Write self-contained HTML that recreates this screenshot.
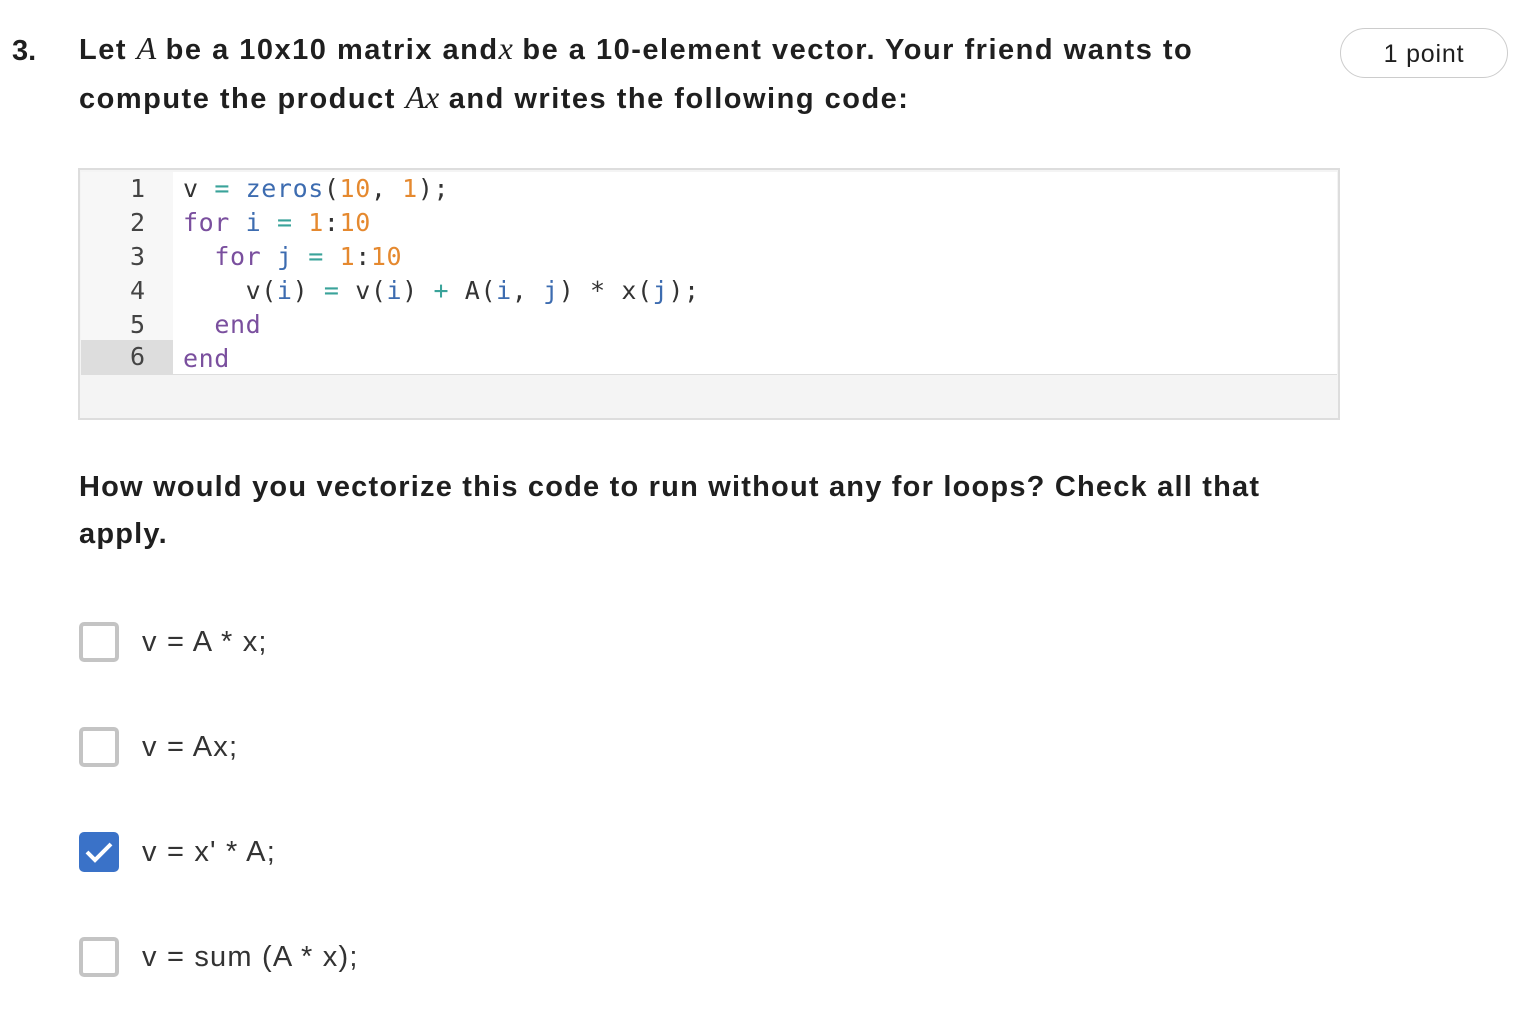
<!DOCTYPE html>
<html><head><style>
body{margin:0;background:#fff;width:1514px;height:1026px;overflow:hidden;font-family:"Liberation Sans",sans-serif;color:#1f1f1f;position:relative}
.num{position:absolute;left:12px;top:28px;font-size:29px;font-weight:bold;line-height:46px}
.q{position:absolute;left:79px;top:25px;width:1250px;font-size:29px;font-weight:bold;line-height:47px;letter-spacing:1.5px}
.q i{font-family:"Liberation Serif",serif;font-weight:normal;font-size:32px;letter-spacing:0}
.pt{position:absolute;left:1340px;top:28px;width:168px;height:50px;border:1px solid #ccc;border-radius:26px;box-sizing:border-box;font-size:25px;text-align:center;line-height:50px;color:#1f1f1f;letter-spacing:0.8px}
.code{position:absolute;left:78px;top:168px;width:1262px;height:252px;border:2px solid #ddd;box-sizing:border-box;background:#f4f4f4}
.ed{position:absolute;left:1px;top:2px;width:1256px;height:202px;background:#fff;border-bottom:1px solid #ddd}
.gut{position:absolute;left:0;top:0;width:92px;height:202px;background:#f7f7f7}
.ln{position:absolute;left:0;width:92px;height:34px;font-family:"DejaVu Sans Mono","Liberation Mono",monospace;font-size:25px;line-height:34px;text-align:right;box-sizing:border-box;padding-right:28px;color:#444}
.cl{position:absolute;left:102px;font-family:"DejaVu Sans Mono","Liberation Mono",monospace;font-size:25px;line-height:34px;white-space:pre;color:#333;letter-spacing:0.6px}
.k{color:#7a4f9e}.n{color:#e5892f}.f{color:#3d6cb0}.o{color:#3aa39a}
.q2{position:absolute;left:79px;top:464px;width:1230px;font-size:29px;font-weight:bold;line-height:47px;letter-spacing:1.2px}
.opt{position:absolute;left:79px;font-size:29px;color:#333;letter-spacing:1.2px}
.cb{position:absolute;left:0;top:0;width:40px;height:40px;border:4px solid #c4c4c4;border-radius:5px;box-sizing:border-box}
.cb.on{background:#3a72c8;border-color:#3a72c8}
.opt span{position:absolute;left:63px;top:0;line-height:40px;white-space:nowrap}
</style></head><body>
<div class="num">3.</div>
<div class="q">Let <i>A</i> be a 10x10 matrix and<i>x</i> be a 10-element vector. Your friend wants to compute the product <i>Ax</i> and writes the following code:</div>
<div class="pt">1 point</div>
<div class="code"><div class="ed">
<div class="gut"></div>
<div class="ln" style="top:0">1</div><div class="ln" style="top:34px">2</div><div class="ln" style="top:68px">3</div><div class="ln" style="top:102px">4</div><div class="ln" style="top:136px">5</div><div class="ln" style="top:168px;background:#ddd">6</div>
<div class="cl" style="top:0">v <span class="o">=</span> <span class="f">zeros</span>(<span class="n">10</span>, <span class="n">1</span>);</div>
<div class="cl" style="top:34px"><span class="k">for</span> <span class="f">i</span> <span class="o">=</span> <span class="n">1</span>:<span class="n">10</span></div>
<div class="cl" style="top:68px">  <span class="k">for</span> <span class="f">j</span> <span class="o">=</span> <span class="n">1</span>:<span class="n">10</span></div>
<div class="cl" style="top:102px">    v(<span class="f">i</span>) <span class="o">=</span> v(<span class="f">i</span>) <span class="o">+</span> A(<span class="f">i</span>, <span class="f">j</span>) * x(<span class="f">j</span>);</div>
<div class="cl" style="top:136px">  <span class="k">end</span></div>
<div class="cl" style="top:170px"><span class="k">end</span></div>
</div></div>
<div class="q2">How would you vectorize this code to run without any for loops? Check all that apply.</div>
<div class="opt" style="top:622px"><div class="cb"></div><span>v = A * x;</span></div>
<div class="opt" style="top:727px"><div class="cb"></div><span>v = Ax;</span></div>
<div class="opt" style="top:832px"><div class="cb on"><svg width="32" height="32" viewBox="0 0 32 32" style="position:absolute;left:0;top:0"><path d="M4 16 L12 24 L28 8" stroke="#fff" stroke-width="4" fill="none"/></svg></div><span>v = x' * A;</span></div>
<div class="opt" style="top:937px"><div class="cb"></div><span>v = sum (A * x);</span></div>
</body></html>
